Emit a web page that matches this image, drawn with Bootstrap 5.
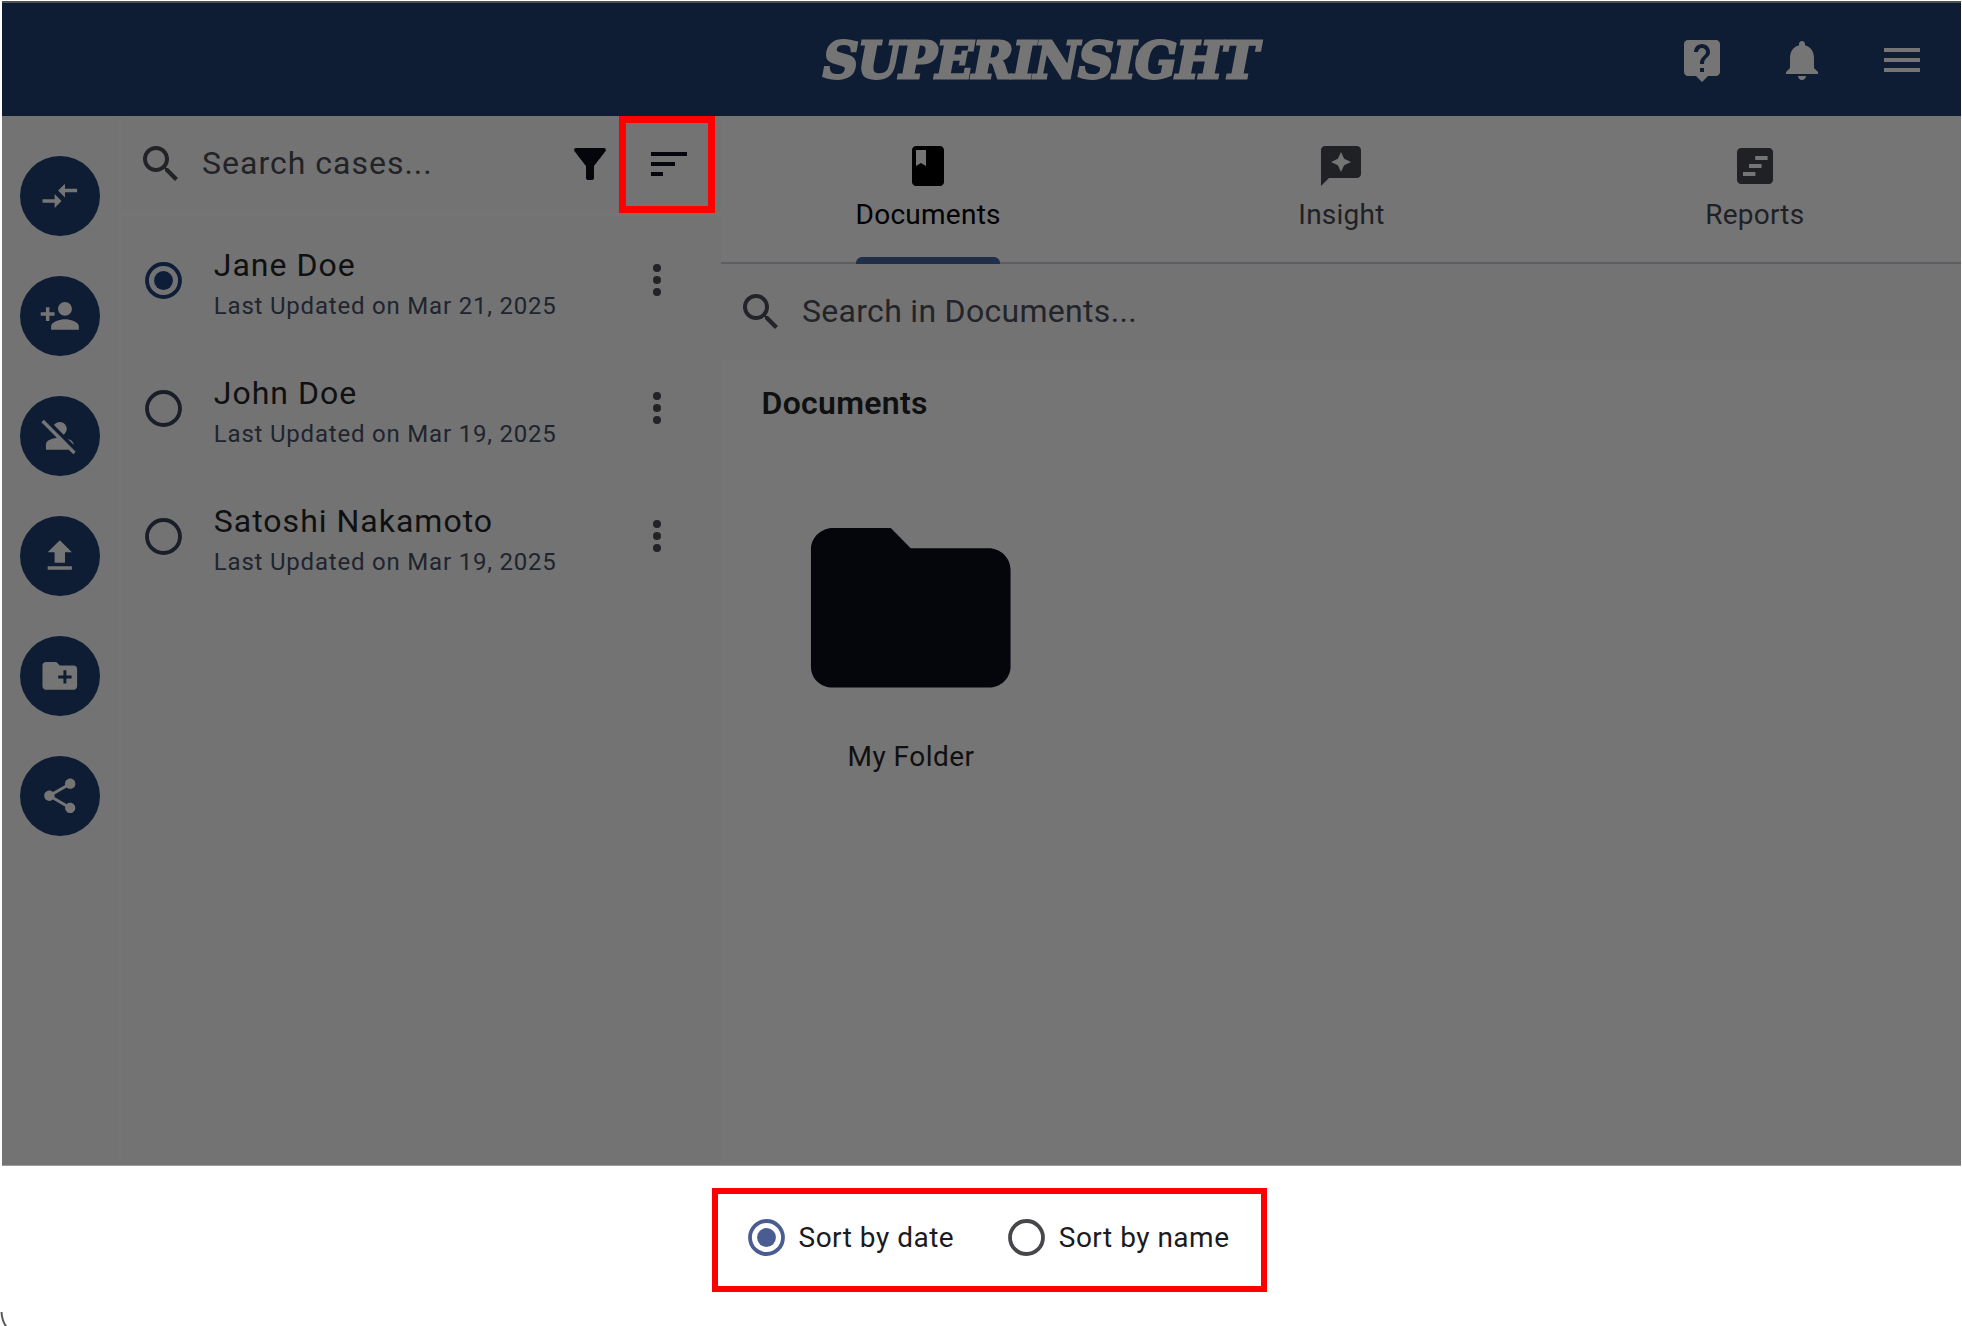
<!DOCTYPE html>
<html lang="en">
<head>
<meta charset="utf-8">
<title>Superinsight</title>
<link href="https://cdn.jsdelivr.net/npm/bootstrap@5.3.0/dist/css/bootstrap.min.css" rel="stylesheet">
<style>
body{font-family:Roboto,"Liberation Sans",sans-serif;background:#fff;color:#0f1011}
.frame{width:1962px;height:1326px;padding:1px 1px 0 2px;overflow:hidden}
svg{display:block;fill:currentColor;flex:none}
.i48{width:48px;height:48px}
.i42{width:41.6px;height:41.6px}
.rd{width:37px;height:37px}
.rd .ring{fill:none;stroke:currentColor;stroke-width:3.8}
.topbar{height:115px;background:#0e1d33;color:#757575;border-top:2px solid #4d514f}
.brand{font:italic bold 49.5px/60px "DejaVu Serif",serif;-webkit-text-stroke:2.8px #757575;letter-spacing:-1.15px;margin:3px 0 0 821px}
.topnav{gap:52px;padding-right:35.5px}
.work{height:1050px;background:#757575;border-bottom:1px solid #9c9c9c}
.rail{width:117px;background:#737373;padding:40px 0 0 17.5px;gap:40px}
.fab{width:80px;height:80px;border-radius:50%;background:#0e1d33;color:#757575}
.cases{width:602px;background:#737373;border-left:2px solid #757575}
.case-search{height:100px;border-bottom:4px solid #757575;padding:0 6.5px 0 16px;color:#222327}
.ph{font-size:32px;line-height:40px;margin:0 0 3px 17px;letter-spacing:1px}
.ink{color:#04060c}
.redbox{border:7.5px solid #f00}
.sortbtn{width:96px;height:97px;background:none;margin-left:5px;position:relative;z-index:1}
.case-row{height:128px;padding:0 40px 0 23.8px;color:#1a1e29}
.case-row.active{color:#0e1d38}
.case-text{margin:6px 0 0 32px}
.case-name{font-size:32px;line-height:38px;letter-spacing:1px;margin-bottom:8px;color:#0f1011}
.case-sub{font-size:24px;line-height:28px;letter-spacing:.8px;color:#20242f}
.dots{color:#222327}
.tabs{height:148px;border-bottom:2.5px solid #5d5e63}
.tabitem{padding:25.6px 0 0 1px;font-size:28px;line-height:32px;letter-spacing:.25px;color:#202125;position:relative;gap:9.4px}
.tabitem.on{color:#000}
.tabitem.on::after{content:"";position:absolute;bottom:-2px;width:144.5px;height:7px;background:#1f2e49;border-radius:6px 6px 0 0}
.docsearch{height:96px;background:#737373;color:#232429;padding-left:16px}
.docsearch .ph{letter-spacing:.3px}
.doctitle{font-size:32px;line-height:40px;font-weight:600;letter-spacing:.3px;padding:22.8px 0 0 40.5px;margin:0}
.folder{width:300px;margin:65px 0 0 40px}
.folder svg{width:239.5px;height:239.5px}
.folder-name{font-size:28px;line-height:34px;letter-spacing:.45px;margin-top:13px}
.sheet{height:160px;background:#fff;padding:22px 0 0 710px;color:#1b1b1f;font-size:28px;line-height:34px;letter-spacing:.5px}
.sortbox{width:555px;height:104px;border-width:6px;padding:0 0 4.5px 29.5px;gap:53.6px}
.opt{gap:14px}
.blue{color:#495d92}
.grey{color:#47474b}
.corner{position:absolute;left:0;top:1310px;width:10px;height:16px}
</style>
</head>
<body>
<div class="frame">
<header class="topbar d-flex align-items-center justify-content-between">
 <div class="brand">SUPERINSIGHT</div>
 <nav class="topnav d-flex">
  <svg class="i48" viewBox="0 0 24 24"><path d="M19 2H5c-1.11 0-2 .9-2 2v14c0 1.1.89 2 2 2h4l3 3 3-3h4c1.1 0 2-.9 2-2V4c0-1.1-.9-2-2-2zm-6 16h-2v-2h2v2zm2.07-7.75l-.9.92C13.45 11.9 13 12.5 13 14h-2v-.5c0-1.1.45-2.1 1.17-2.83l1.24-1.26c.37-.36.59-.86.59-1.41 0-1.1-.9-2-2-2s-2 .9-2 2H8c0-2.21 1.79-4 4-4s4 1.79 4 4c0 .88-.36 1.68-.93 2.25z"/></svg>
  <svg class="i48" viewBox="0 0 24 24"><path d="M12 22c1.1 0 2-.9 2-2h-4c0 1.1.89 2 2 2zm6-6v-5c0-3.07-1.64-5.64-4.5-6.32V4c0-.83-.67-1.5-1.5-1.5s-1.5.67-1.5 1.5v.68C7.63 5.36 6 7.92 6 11v5l-2 2v1h16v-1l-2-2z"/></svg>
  <svg class="i48" viewBox="0 0 24 24"><path d="M3 18h18v-2H3v2zm0-5h18v-2H3v2zm0-7v2h18V6H3z"/></svg>
 </nav>
</header>
<main class="work d-flex">
 <aside class="rail d-flex flex-column flex-shrink-0">
  <div class="fab d-flex align-items-center justify-content-center flex-shrink-0"><svg class="i42" viewBox="0 0 24 24"><path d="M9.01 14H2v2h7.01v3L13 15l-3.99-4v3zm5.98-1v-3H22V8h-7.01V5L11 9l3.99 4z"/></svg></div>
  <div class="fab d-flex align-items-center justify-content-center flex-shrink-0"><svg class="i42" viewBox="0 0 24 24"><path d="M15 12c2.21 0 4-1.79 4-4s-1.79-4-4-4-4 1.79-4 4 1.79 4 4 4zm-9-2V7H4v3H1v2h3v3h2v-3h3v-2H6zm9 4c-2.67 0-8 1.34-8 4v2h16v-2c0-2.66-5.33-4-8-4z"/></svg></div>
  <div class="fab d-flex align-items-center justify-content-center flex-shrink-0"><svg class="i42" viewBox="0 0 24 24"><path d="M8.65 5.82C9.36 4.72 10.6 4 12 4c2.21 0 4 1.79 4 4 0 1.4-.72 2.64-1.82 3.35L8.65 5.82zM20 17.17c-.02-1.1-.63-2.11-1.61-2.62-.54-.28-1.13-.54-1.77-.76L20 17.17zM21.19 21.19L2.81 2.81 1.39 4.22l8.89 8.89c-1.81.23-3.39.79-4.67 1.45C4.61 15.07 4 16.1 4 17.22V20h13.17l2.61 2.61 1.41-1.42z"/></svg></div>
  <div class="fab d-flex align-items-center justify-content-center flex-shrink-0"><svg class="i42" viewBox="0 0 24 24"><path d="M5 20h14v-2H5v2zm0-10h4v6h6v-6h4l-7-7-7 7z"/></svg></div>
  <div class="fab d-flex align-items-center justify-content-center flex-shrink-0"><svg class="i42" viewBox="0 0 24 24"><path d="M20 6h-8l-2-2H4c-1.11 0-1.99.89-1.99 2L2 18c0 1.11.89 2 2 2h16c1.11 0 2-.89 2-2V8c0-1.11-.89-2-2-2zm-1.2 7.5h-3v3h-1.7v-3h-3v-1.7h3v-3h1.7v3h3v1.7z"/></svg></div>
  <div class="fab d-flex align-items-center justify-content-center flex-shrink-0"><svg class="i42" viewBox="0 0 24 24"><path d="M18 16.08c-.76 0-1.44.3-1.96.77L8.91 12.7c.05-.23.09-.46.09-.7s-.04-.47-.09-.7l7.05-4.11c.54.5 1.25.81 2.04.81 1.66 0 3-1.34 3-3s-1.34-3-3-3-3 1.34-3 3c0 .24.04.47.09.7L8.04 9.81C7.5 9.31 6.79 9 6 9c-1.66 0-3 1.34-3 3s1.34 3 3 3c.79 0 1.5-.31 2.04-.81l7.12 4.16c-.05.21-.08.43-.08.65 0 1.61 1.31 2.92 2.92 2.92 1.61 0 2.92-1.31 2.92-2.92s-1.31-2.92-2.92-2.92z"/></svg></div>
 </aside>
 <section class="cases flex-shrink-0">
  <div class="case-search d-flex align-items-center">
   <svg class="i48" viewBox="0 0 24 24"><path d="M15.5 14h-.79l-.28-.27C15.41 12.59 16 11.11 16 9.5 16 5.91 13.09 3 9.5 3S3 5.91 3 9.5 5.91 16 9.5 16c1.61 0 3.09-.59 4.23-1.57l.27.28v.79l5 4.99L20.49 19l-4.99-5zm-6 0C7.01 14 5 11.99 5 9.5S7.01 5 9.5 5 14 7.01 14 9.5 11.99 14 9.5 14z"/></svg>
   <span class="ph">Search cases...</span>
   <svg class="i48 ink ms-auto" viewBox="0 0 24 24"><path d="M4.25 5.61C6.27 8.2 10 13 10 13v6c0 .55.45 1 1 1h2c.55 0 1-.45 1-1v-6s3.72-4.8 5.74-7.39c.51-.66.04-1.61-.79-1.61H5.04c-.83 0-1.3.95-.79 1.61z"/></svg>
   <button class="redbox sortbtn ink p-0 flex-shrink-0 d-flex align-items-center justify-content-center"><svg class="i48 ms-1" viewBox="0 0 24 24"><path d="M3 18h6v-2H3v2zM3 6v2h18V6H3zm0 7h12v-2H3v2z"/></svg></button>
  </div>
  <div class="case-row active d-flex align-items-center">
   <svg class="rd" viewBox="0 0 37 37"><circle class="ring" cx="18.5" cy="18.5" r="16.5"/><circle cx="18.5" cy="18.5" r="9.4"/></svg>
   <div class="case-text"><div class="case-name">Jane Doe</div><div class="case-sub">Last Updated on Mar 21, 2025</div></div>
   <svg class="i48 dots ms-auto" viewBox="0 0 24 24"><circle cx="12" cy="6" r="2"/><circle cx="12" cy="12" r="2"/><circle cx="12" cy="18" r="2"/></svg>
  </div>
  <div class="case-row d-flex align-items-center">
   <svg class="rd" viewBox="0 0 37 37"><circle class="ring" cx="18.5" cy="18.5" r="16.5"/></svg>
   <div class="case-text"><div class="case-name">John Doe</div><div class="case-sub">Last Updated on Mar 19, 2025</div></div>
   <svg class="i48 dots ms-auto" viewBox="0 0 24 24"><circle cx="12" cy="6" r="2"/><circle cx="12" cy="12" r="2"/><circle cx="12" cy="18" r="2"/></svg>
  </div>
  <div class="case-row d-flex align-items-center">
   <svg class="rd" viewBox="0 0 37 37"><circle class="ring" cx="18.5" cy="18.5" r="16.5"/></svg>
   <div class="case-text"><div class="case-name">Satoshi Nakamoto</div><div class="case-sub">Last Updated on Mar 19, 2025</div></div>
   <svg class="i48 dots ms-auto" viewBox="0 0 24 24"><circle cx="12" cy="6" r="2"/><circle cx="12" cy="12" r="2"/><circle cx="12" cy="18" r="2"/></svg>
  </div>
 </section>
 <section class="flex-grow-1">
  <div class="tabs d-flex">
   <div class="tabitem on d-flex flex-column align-items-center flex-fill w-100"><svg class="i48" viewBox="0 0 24 24"><path d="M18 2H6c-1.1 0-2 .9-2 2v16c0 1.1.9 2 2 2h12c1.1 0 2-.9 2-2V4c0-1.1-.9-2-2-2zM6 4h5v8l-2.5-1.5L6 12V4z"/></svg>Documents</div>
   <div class="tabitem d-flex flex-column align-items-center flex-fill w-100"><svg class="i48" viewBox="0 0 24 24"><path d="M20 2H4c-1.1 0-1.99.9-1.99 2L2 22l4-4h14c1.1 0 2-.9 2-2V4c0-1.1-.9-2-2-2zm-6.43 9.57L12 15l-1.57-3.43L7 10l3.43-1.57L12 5l1.57 3.43L17 10l-3.43 1.57z"/></svg>Insight</div>
   <div class="tabitem d-flex flex-column align-items-center flex-fill w-100"><svg class="i48" viewBox="0 0 24 24"><path d="M19 3H5c-1.1 0-2 .9-2 2v14c0 1.1.9 2 2 2h14c1.1 0 2-.9 2-2V5c0-1.1-.9-2-2-2zm-6.8 14H6v-2h6.2v2zm3.1-4H9v-2h6.3v2zm3-4h-6.2V7h6.2v2z"/></svg>Reports</div>
  </div>
  <div class="docsearch d-flex align-items-center">
   <svg class="i48" viewBox="0 0 24 24"><path d="M15.5 14h-.79l-.28-.27C15.41 12.59 16 11.11 16 9.5 16 5.91 13.09 3 9.5 3S3 5.91 3 9.5 5.91 16 9.5 16c1.61 0 3.09-.59 4.23-1.57l.27.28v.79l5 4.99L20.49 19l-4.99-5zm-6 0C7.01 14 5 11.99 5 9.5S7.01 5 9.5 5 14 7.01 14 9.5 11.99 14 9.5 14z"/></svg>
   <span class="ph">Search in Documents...</span>
  </div>
  <h1 class="doctitle">Documents</h1>
  <div class="folder d-flex flex-column align-items-center">
   <svg class="ink" viewBox="0 0 24 24"><path d="M9.6 4H4.2C3 4 2 5 2 6.1v11.8C2 19.1 3 20 4.2 20h15.6c1.2 0 2.2-.95 2.2-2.1V8.2C22 7 21 6.05 19.8 6.05H12L10 4z"/></svg>
   <div class="folder-name">My Folder</div>
  </div>
 </section>
</main>
<footer class="sheet">
 <div class="sortbox redbox d-flex align-items-center">
  <div class="opt d-flex align-items-center"><svg class="rd blue" viewBox="0 0 37 37"><circle class="ring" cx="18.5" cy="18.5" r="16.5"/><circle cx="18.5" cy="18.5" r="9.4"/></svg><span>Sort by date</span></div>
  <div class="opt d-flex align-items-center"><svg class="rd grey" viewBox="0 0 37 37"><circle class="ring" cx="18.5" cy="18.5" r="16.5"/></svg><span>Sort by name</span></div>
 </div>
</footer>
<svg class="corner" viewBox="0 0 10 16"><path d="M1.5 2Q2 11 6.5 17" fill="none" stroke="#5a5a5a" stroke-width="2"/></svg>
</div>
<script src="https://cdn.jsdelivr.net/npm/bootstrap@5.3.0/dist/js/bootstrap.bundle.min.js"></script>
</body>
</html>
